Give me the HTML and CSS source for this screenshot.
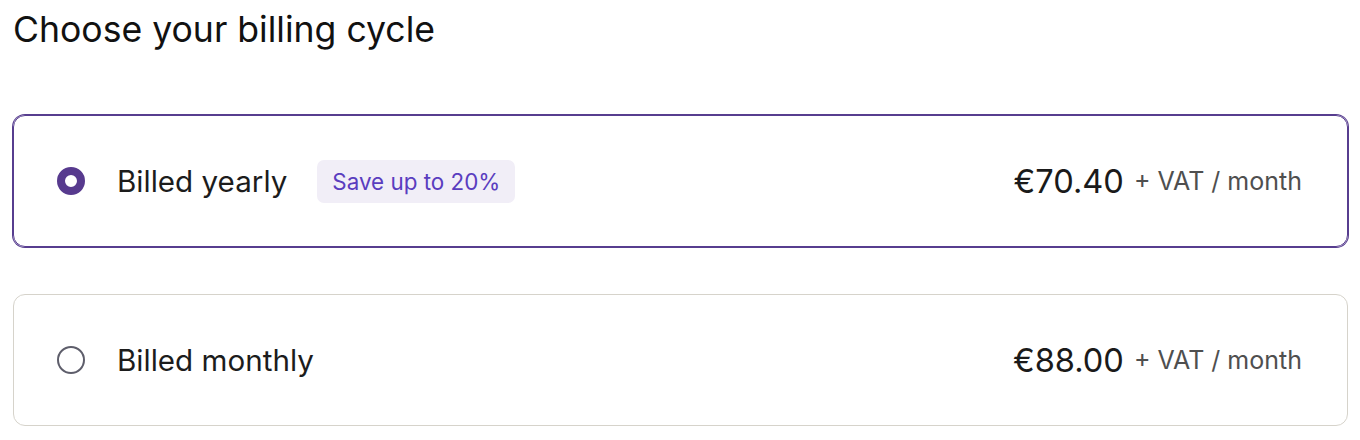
FILE: index.html
```html
<!DOCTYPE html>
<html lang="en">

<head>
  <meta charset="utf-8">
  <meta name="viewport" content="width=device-width, initial-scale=1">
  <title>Billing cycle</title>
  <link rel="stylesheet" href="styles.css">
</head>

<body>
  <section class="billing">
    <h1 class="billing-title">Choose your billing cycle</h1>
    <ul class="cycle-list">
      <li class="cycle-option selected">
        <span class="radio"></span>
        <span class="cycle-name">Billed yearly</span>
        <span class="badge">Save up to 20%</span>
        <span class="price">€70.40</span>
        <span class="price-note">+ VAT / month</span>
      </li>
      <li class="cycle-option">
        <span class="radio"></span>
        <span class="cycle-name">Billed monthly</span>
        <span class="price">€88.00</span>
        <span class="price-note">+ VAT / month</span>
      </li>
    </ul>
  </section>
</body>

</html>
```

FILE: styles.css
```css
body {
  margin: 0;
  font-family: Inter, "Noto Sans", sans-serif;
  background-color: #fff;
  color: #1c1c1c;
}
.billing {
  padding: 7px 12px 0 13px;
}
.billing-title {
  margin: 0;
  font-size: 35.6px;
  font-weight: 400;
  line-height: 46px;
  color: #111;
}
.cycle-list {
  list-style-type: none;
  margin: 62px 0 0;
  padding: 0;
  display: flex;
  flex-direction: column;
  gap: 47px;
}
.cycle-option {
  height: 130px;
  display: flex;
  align-items: center;
  padding: 0 45px 0 43px;
  border: 1px solid #d6d3cb;
  border-radius: 12px;
}
.cycle-option.selected {
  border-color: #573d8f;
  box-shadow: 0 0 0 1px #573d8f;
}
.radio {
  width: 28px;
  height: 28px;
  box-sizing: border-box;
  border: 2px solid #5e5e6b;
  border-radius: 50%;
  flex-shrink: 0;
}
.selected .radio {
  border: 8px solid #573a8e;
}
.cycle-name {
  margin-left: 32px;
  font-size: 29.6px;
}
.badge {
  margin-left: 30px;
  padding: 0 15px;
  height: 43px;
  display: flex;
  align-items: center;
  border-radius: 7px;
  background-color: #f1eef7;
  color: #5a3dbf;
  font-size: 22.4px;
}
.price {
  margin-left: auto;
  font-size: 32.6px;
  color: #1a1a1a;
}
.price-note {
  margin-left: 10px;
  font-size: 25px;
  color: #4f4f4f;
}
```
